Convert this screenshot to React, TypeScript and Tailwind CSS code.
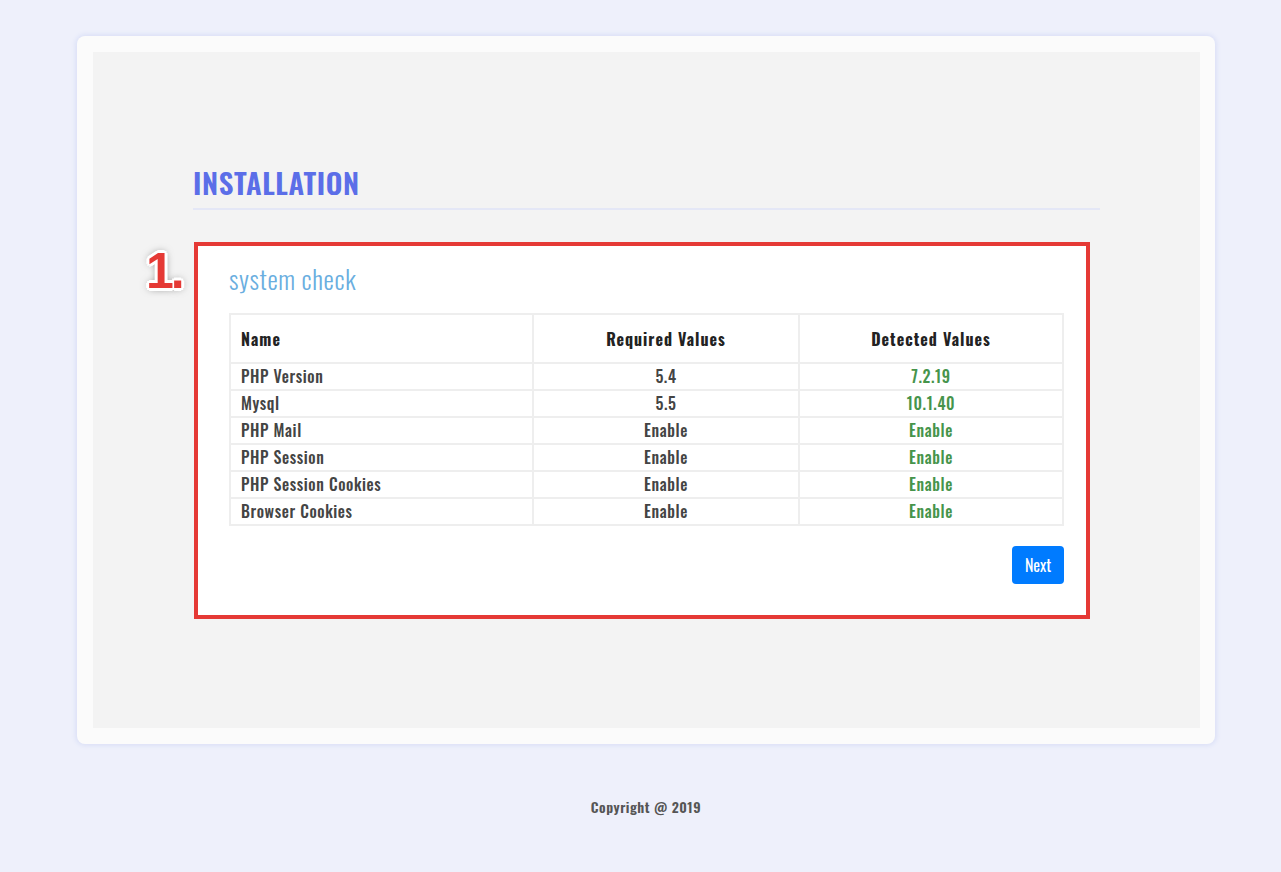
const font = "font-['Oswald','Liberation_Sans_Narrow','DejaVu_Sans_Condensed','Roboto_Condensed',sans-serif]"

type Row = { name: string; required: string; detected: string }

const rows: Row[] = [
  { name: 'PHP Version', required: '5.4', detected: '7.2.19' },
  { name: 'Mysql', required: '5.5', detected: '10.1.40' },
  { name: 'PHP Mail', required: 'Enable', detected: 'Enable' },
  { name: 'PHP Session', required: 'Enable', detected: 'Enable' },
  { name: 'PHP Session Cookies', required: 'Enable', detected: 'Enable' },
  { name: 'Browser Cookies', required: 'Enable', detected: 'Enable' },
]

// outline + soft drop shadow for the step marker
const markerShadow =
  "[text-shadow:3px_0_0_#fff,-3px_0_0_#fff,0_3px_0_#fff,0_-3px_0_#fff,2px_2px_0_#fff,-2px_-2px_0_#fff,2px_-2px_0_#fff,-2px_2px_0_#fff,0_0_8px_rgba(0,0,0,0.6)]"

function SystemCheck() {
  return (
    <div className="relative ml-px w-[896px] border-4 border-[#e53935] bg-white">
      <span
        className={`absolute -left-[52px] top-[0px] font-['Liberation_Sans',sans-serif] text-[50px] font-bold leading-none tracking-[-3px] text-[#e53935] ${markerShadow}`}
      >
        1.
      </span>
      <div className="pb-[31px] pl-[31px] pr-[22px] pt-[16px]">
        <h2 className="text-[26px] font-light leading-[34px] tracking-[0.6px] text-[#6aaee0]">system check</h2>
        <table className="mt-[17px] w-full border-collapse text-[16px] font-medium tracking-[0.6px] text-[#444]">
          <thead>
            <tr className="h-[49px] tracking-[1px]">
              <th className="w-[303px] border-2 border-[#eeeeee] px-[10px] text-left font-bold text-[#222]">Name</th>
              <th className="w-[266px] border-2 border-[#eeeeee] font-bold text-[#222]">Required Values</th>
              <th className="border-2 border-[#eeeeee] font-bold text-[#222]">Detected Values</th>
            </tr>
          </thead>
          <tbody>
            {rows.map((r) => (
              <tr key={r.name} className="h-[27px]">
                <td className="border-2 border-[#eeeeee] px-[10px] leading-[23px]">{r.name}</td>
                <td className="border-2 border-[#eeeeee] text-center leading-[23px]">{r.required}</td>
                <td className="border-2 border-[#eeeeee] text-center leading-[23px] text-[#46944b]">{r.detected}</td>
              </tr>
            ))}
          </tbody>
        </table>
        <div className="mt-[20px] flex justify-end">
          <button className="h-[38px] w-[52px] rounded-[4px] bg-[#007bff] text-[16px] text-white">Next</button>
        </div>
      </div>
    </div>
  )
}

export default function App() {
  return (
    <div className={`min-h-[872px] bg-[#eef0fb] pt-[36px] ${font}`}>
      <div className="ml-[77px] w-[1138px]">
        <div className="rounded-[8px] bg-[#fbfbfb] p-[16px] pr-[15px] shadow-[0_0_4px_2px_#dce1f7]">
          <div className="h-[676px] bg-[#f3f3f3] px-[100px] pt-[110px]">
            <h1 className="text-[29px] font-semibold leading-[40px] tracking-[0.6px] text-[#5b6ee8]">INSTALLATION</h1>
            <div className="mt-[6px] h-[2px] bg-[#e4e7f6]" />
            <div className="mt-[32px]">
              <SystemCheck />
            </div>
          </div>
        </div>
        <p className="mt-[52px] text-center text-[14px] font-semibold tracking-[0.5px] text-[#555]">Copyright @ 2019</p>
      </div>
    </div>
  )
}
